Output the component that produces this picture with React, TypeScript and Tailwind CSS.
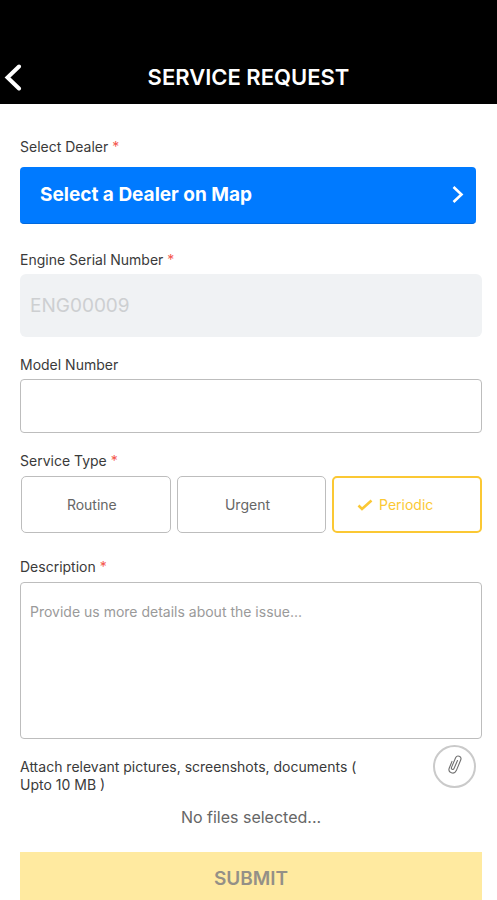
import { useState } from "react";
import type { ReactNode } from "react";
import clsx from "clsx";

const SERVICE_TYPES = ["Routine", "Urgent", "Periodic"];

function Required() {
  return <span className="text-[#f4574d]">*</span>;
}

function FieldLabel({ htmlFor, children }: { htmlFor: string; children: ReactNode }) {
  return (
    <label htmlFor={htmlFor} className="block h-5 text-sm leading-5 text-[#3a3a3a]">
      {children}
    </label>
  );
}

function BackIcon() {
  return (
    <svg width="28" height="28" viewBox="0 0 28 28" fill="none" stroke="currentColor" strokeWidth="4" aria-hidden="true">
      <path d="M19 3.5 L7.5 14.5 L19 25.5" strokeLinecap="round" />
    </svg>
  );
}

function ChevronIcon() {
  return (
    <svg width="12" height="18" viewBox="0 0 12 18" fill="none" stroke="currentColor" strokeWidth="2.6" aria-hidden="true">
      <path d="M1.5 1 L9.5 8.5 L1.5 16" />
    </svg>
  );
}

function TickIcon() {
  return (
    <svg width="16" height="12" viewBox="0 0 16 12" fill="none" stroke="currentColor" strokeWidth="2.6" aria-hidden="true">
      <path d="M1.5 6.5 L5 10 L14.5 1.5" />
    </svg>
  );
}

function ClipIcon() {
  return (
    <svg width="16" height="22" viewBox="0 0 16 22" fill="none" stroke="currentColor" strokeWidth="1.1" strokeLinecap="round" aria-hidden="true">
      <path d="M10.5 6.5 L7 14.5 C6.2 16.3 3.8 15.3 4.5 13.4 L8.6 3.8 C10 .6 15 2.2 13.8 5.8 L9.3 16.6 C7.2 21.2 .6 18.8 2.2 14.2 L5 7.4" />
    </svg>
  );
}

export default function App() {
  const [serviceType, setServiceType] = useState("Periodic");
  const [model, setModel] = useState("");
  const [description, setDescription] = useState("");

  return (
    <div className="bg-white font-['Inter',sans-serif]">
      <header className="grid h-26 grid-cols-[48px_1fr_48px] items-end bg-black pb-[11px] text-white">
        <button type="button" aria-label="Back" className="flex h-8 items-center">
          <BackIcon />
        </button>
        <h1 className="text-center text-[22px] leading-8 font-semibold">SERVICE REQUEST</h1>
      </header>

      <form className="pt-[33px] pr-[15px] pl-5" onSubmit={(e) => e.preventDefault()}>
        <FieldLabel htmlFor="dealer">
          Select Dealer <Required />
        </FieldLabel>
        <div className="mt-[10px] pr-[6px]">
          <button
            id="dealer"
            type="button"
            className="flex h-[57px] w-full items-center justify-between rounded-sm border-b border-[#0068dd] bg-[#007aff] pr-3 pl-5 text-[19px] font-bold text-white"
          >
            Select a Dealer on Map
            <ChevronIcon />
          </button>
        </div>

        <div className="mt-[26px]">
          <FieldLabel htmlFor="serial">
            Engine Serial Number <Required />
          </FieldLabel>
          <input
            id="serial"
            disabled
            value="ENG00009"
            className="mt-[4px] block h-[63px] w-full rounded-md bg-[#f0f2f4] px-[10px] text-[19px] text-[#cdcfd1]"
          />
        </div>

        <div className="mt-[18px]">
          <FieldLabel htmlFor="model">Model Number</FieldLabel>
          <input
            id="model"
            value={model}
            onChange={(e) => setModel(e.target.value)}
            className="mt-[4px] block h-[54px] w-full rounded-sm border border-[#bdbdbd] px-[10px] text-[19px] outline-none"
          />
        </div>

        <fieldset className="mt-[18px]">
          <legend className="h-5 text-sm leading-5 text-[#3a3a3a]">
            Service Type <Required />
          </legend>
          <div className="mt-[5px] grid grid-cols-3 gap-[6px] pl-px">
            {SERVICE_TYPES.map((type) => {
              const selected = type === serviceType;
              return (
                <label
                  key={type}
                  className={clsx(
                    "flex h-[57px] cursor-pointer items-center justify-center gap-[6px] rounded-[5px] text-sm",
                    selected ? "border-2 border-[#fbc834] pr-6 text-[#fbc834]" : "border border-[#bdbdbd] pr-2 text-[#666]"
                  )}
                >
                  <input
                    type="radio"
                    name="serviceType"
                    className="sr-only"
                    checked={selected}
                    onChange={() => setServiceType(type)}
                  />
                  {selected && <TickIcon />}
                  {type}
                </label>
              );
            })}
          </div>
        </fieldset>

        <div className="mt-6">
          <FieldLabel htmlFor="description">
            Description <Required />
          </FieldLabel>
          <textarea
            id="description"
            value={description}
            onChange={(e) => setDescription(e.target.value)}
            placeholder="Provide us more details about the issue..."
            className="mt-[5px] block h-[157px] w-full resize-none rounded-sm border border-[#bdbdbd] px-[9px] pt-[19px] text-sm leading-5 outline-none placeholder:text-[#9a9a9a]"
          />
        </div>

        <div className="flex items-start justify-between pt-[6px] pr-[6px]">
          <p className="max-w-96 pt-[13px] text-sm leading-[18px] text-[#3a3a3a]">
            Attach relevant pictures, screenshots, documents (<br />
            Upto 10 MB )
          </p>
          <button
            type="button"
            aria-label="Attach files"
            className="flex size-[43px] shrink-0 items-center justify-center rounded-full border-2 border-[#cacaca] pb-1 text-[#707070]"
          >
            <ClipIcon />
          </button>
        </div>
        <p className="mt-[11px] text-center text-base leading-6 text-[#666]">No files selected...</p>

        <button type="submit" className="mt-[23px] h-12 w-full bg-[#ffeaa0] pt-[6px] text-[19px] font-semibold text-[#949087]">
          SUBMIT
        </button>
      </form>
    </div>
  );
}
